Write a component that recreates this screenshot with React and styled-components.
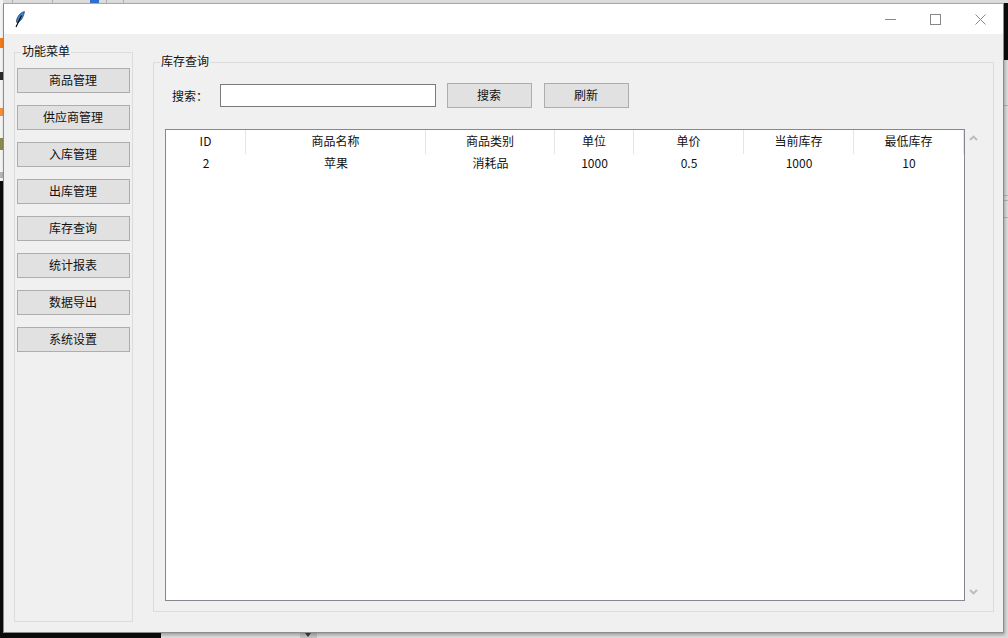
import React from 'react';
import styled, { createGlobalStyle } from 'styled-components';

const Global = createGlobalStyle`
  html, body { margin: 0; padding: 0; width: 1008px; height: 638px; overflow: hidden; }
  body { font-family: "Noto Sans CJK SC", "Liberation Sans", sans-serif; }
`;
const strip = (c, x, y, w, h) => `linear-gradient(${c}, ${c}) ${x}px ${y}px / ${w}px ${h}px no-repeat`;
const Desktop = styled.div`
  position: relative;
  width: 1008px; height: 638px; padding: 3px 4px 5px 3px; box-sizing: border-box;
  background:
    ${strip('#0c0c0c', 1004, 3, 4, 57)},
    ${strip('#f07a1c', 0, 38, 3, 10)},
    ${strip('#2a2a2a', 0, 72, 3, 8)},
    ${strip('#f0903c', 0, 108, 3, 8)},
    ${strip('#8a8a50', 0, 138, 3, 12)},
    ${strip('#b5b5b5', 0, 172, 3, 6)},
    ${strip('#2f6fd0', 90, 0, 9, 3)},
    ${strip('#b0b0b0', 12, 0, 1, 3)},
    ${strip('#b0b0b0', 52, 0, 1, 3)},
    ${strip('#b0b0b0', 106, 0, 1, 3)},
    ${strip('#b0b0b0', 123, 0, 1, 3)},
    ${strip('#b5b5b5', 1004, 105, 4, 1)},
    ${strip('#b5b5b5', 1004, 195, 4, 1)},
    ${strip('#b5b5b5', 1004, 200, 4, 1)},
    ${strip('#b5b5b5', 1004, 217, 4, 1)},
    ${strip('#0c0c0c', 0, 181, 3, 457)},
    ${strip('#0c0c0c', 0, 633, 161, 5)},
    ${strip('#f4f4f4', 0, 0, 3, 181)},
    ${strip('#c4c4c4', 300, 633, 17, 5)},
    #dcdcdc;
`;
const Win = styled.div`
  width: 1001px; height: 630px; display: flex; flex-direction: column; background: #f0f0f0;
  border: 1px solid #8c8c8c; border-top-color: #a8a8a8; box-sizing: border-box; box-shadow: 1px 2px 3px rgba(0,0,0,.28);
`;
const Caret = styled.div`
  position: absolute; left: 305px; top: 633px; width: 0; height: 0;
  border-left: 3px solid transparent; border-right: 3px solid transparent; border-top: 4px solid #333;
`;
const TitleBar = styled.div`
  height: 30px; flex: none; background: #fff; display: flex; align-items: center; justify-content: space-between; padding-left: 10px;
`;
const WinBtns = styled.div`display: flex;`;
const WinBtn = styled.div`
  width: 45px; height: 30px; display: flex; align-items: center; justify-content: center;
`;
const Body = styled.div`
  flex: 1; display: flex; align-items: flex-start; padding: 18px 10px 0 10px; gap: 20px; min-height: 0;
`;
const Frame = styled.div`
  position: relative; border: 1px solid #dcdcdc; box-sizing: border-box;
`;
const Legend = styled.span`
  position: absolute; top: -10px; left: 6px; font-size: 12px; line-height: 16px; background: #f0f0f0; padding: 0 1px; color: #111;
`;
const Side = styled(Frame)`
  width: 119px; height: 570px; padding: 15px 2px; display: flex; flex-direction: column; gap: 12px;
`;
const Btn = styled.button`
  width: ${p => p.$w || 113}px; height: 25px; flex: none; border: 1px solid #adadad; background: #e1e1e1; font: inherit;
  font-size: 12px; color: #111; padding: 0 1px 2px 0; box-sizing: border-box;
`;
const Main = styled(Frame)`
  margin-top: 10px; width: 841px; height: 550px; padding: 20px 11px 0 12px;
`;
const SearchRow = styled.div`display: flex; align-items: center; height: 25px;`;
const Label = styled.span`font-size: 12px; width: 54px; padding: 0 0 1px 6px; box-sizing: border-box; color: #111;`;
const Input = styled.div`width: 216px; height: 23px; background: #fff; border: 1px solid #7a7a7a; box-sizing: border-box; margin-right: 11px;`;
const GapBtn = styled(Btn)`margin-right: 12px;`;
const TableRow = styled.div`display: flex; margin-top: 21px; margin-left: -1px; height: 472px;`;
const Table = styled.div`width: 800px; height: 472px; background: #fff; border: 1px solid #828790; box-sizing: border-box;`;
const Row = styled.div`
  display: grid; grid-template-columns: 80px 180px 129px 79px 110px 110px 110px; height: ${p => p.$h}px; align-items: center;
`;
const Cell = styled.div`
  font-size: 12px; text-align: center; color: #111; height: 100%; line-height: ${p => p.$lh}px;
  border-right: ${p => p.$head ? '1px solid #e5e5e5' : 'none'}; box-sizing: border-box;
`;
const Bar = styled.div`width: 20px; display: flex; flex-direction: column; justify-content: space-between; align-items: center; padding: 6px 0 6px; box-sizing: border-box; height: 472px;`;

const cols = ['ID','商品名称','商品类别','单位','单价','当前库存','最低库存'];
const row = ['2','苹果','消耗品','1000','0.5','1000','10'];
const menu = ['商品管理','供应商管理','入库管理','出库管理','库存查询','统计报表','数据导出','系统设置'];

const Feather = () => (
  <svg width="12" height="17" viewBox="0 0 12 17">
    <path d="M10.5 .6 C7 1.2 3.2 5 2.4 10 L3 11.8 C6.2 11 9.4 7 10.5 .6Z" fill="#3d82d0" stroke="#1c3a5c" strokeWidth=".7"/>
    <path d="M7.5 4.5 L2 16" stroke="#000" strokeWidth="1.1" fill="none"/>
  </svg>
);
const Chev = ({up}) => (
  <svg width="9" height="6" viewBox="0 0 9 6"><path d={up ? "M1 5 L4.5 1.6 L8 5" : "M1 1 L4.5 4.4 L8 1"} fill="none" stroke="#bcbcbc" strokeWidth="2"/></svg>
);

export default function App() {
  return (
    <Desktop>
      <Global />
      <Win>
        <TitleBar>
          <Feather />
          <WinBtns>
            <WinBtn><svg width="11" height="11" viewBox="0 0 11 11"><path d="M0 5.5H11" stroke="#888"/></svg></WinBtn>
            <WinBtn><svg width="11" height="11" viewBox="0 0 11 11"><rect x=".5" y=".5" width="10" height="10" fill="none" stroke="#888"/></svg></WinBtn>
            <WinBtn><svg width="11" height="11" viewBox="0 0 11 11"><path d="M.5.5L10.5 10.5M10.5.5L.5 10.5" stroke="#888"/></svg></WinBtn>
          </WinBtns>
        </TitleBar>
        <Body>
          <Side>
            <Legend>功能菜单</Legend>
            {menu.map(m => <Btn key={m}>{m}</Btn>)}
          </Side>
          <Main>
            <Legend>库存查询</Legend>
            <SearchRow>
              <Label>搜索：</Label>
              <Input />
              <GapBtn $w={85}>搜索</GapBtn>
              <Btn $w={85}>刷新</Btn>
            </SearchRow>
            <TableRow>
              <Table>
                <Row $h={24}>{cols.map(c => <Cell key={c} $head $lh={22}>{c}</Cell>)}</Row>
                <Row $h={20}>{row.map((c,i) => <Cell key={i} $lh={18}>{c}</Cell>)}</Row>
              </Table>
              <Bar><Chev up /><Chev /></Bar>
            </TableRow>
          </Main>
        </Body>
      </Win>
      <Caret />
    </Desktop>
  );
}
